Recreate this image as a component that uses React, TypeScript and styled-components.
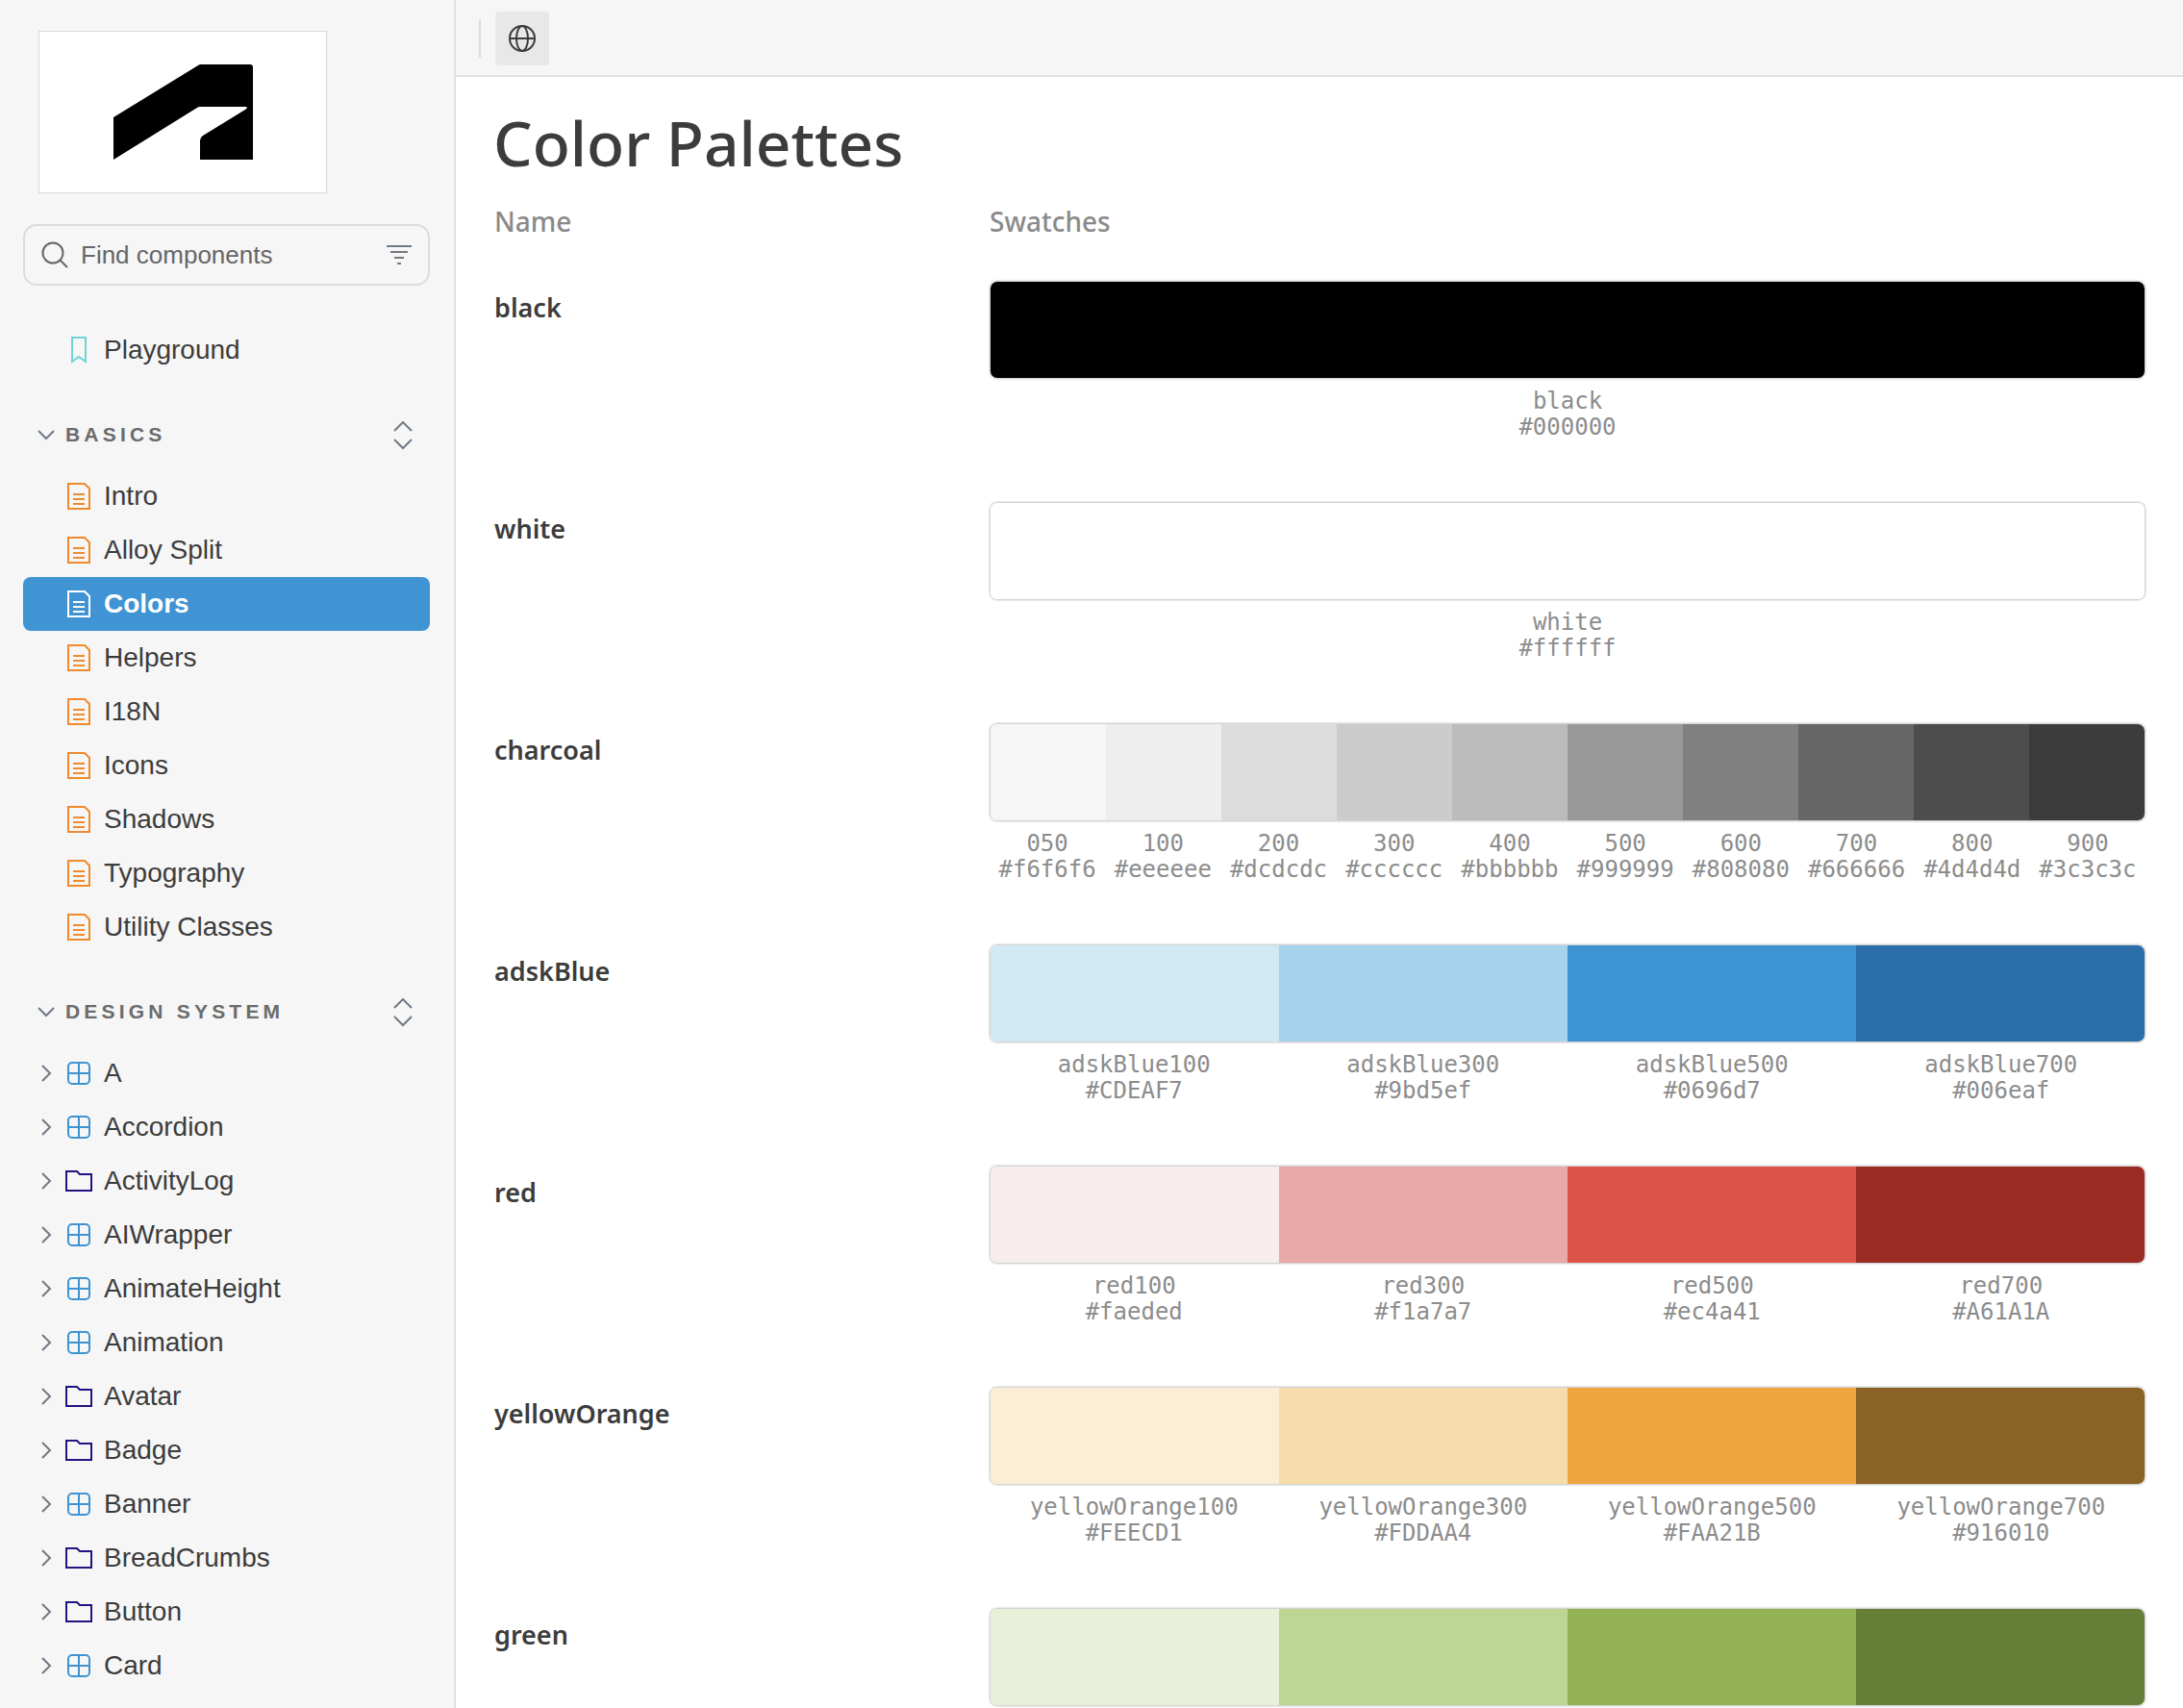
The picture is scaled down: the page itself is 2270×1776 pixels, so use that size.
import React from 'react';
import styled, { createGlobalStyle } from 'styled-components';

const GlobalStyle = createGlobalStyle`
  html, body {
    margin: 0;
    padding: 0;
    height: 100%;
    overflow: hidden;
    background: #fff;
  }
  * { box-sizing: border-box; }
`;

const Page = styled.div`
  display: flex;
  width: 2270px;
  height: 1776px;
  overflow: hidden;
`;

/* Sidebar */
const Sidebar = styled.aside`
  flex: 0 0 474px;
  height: 100%;
  padding: 32px 25px 0 24px;
  background: #f6f6f6;
  border-right: 2px solid #dde1e6;
  font-family: 'Liberation Sans', Arial, sans-serif;
  overflow: hidden;
`;

const LogoBox = styled.div`
  width: 300px;
  height: 169px;
  margin-left: 16px;
  padding-left: 2px;
  background: #fff;
  border: 1px solid #d8d8d2;
  display: flex;
  align-items: center;
  justify-content: center;
`;

const SearchBox = styled.div`
  height: 64px;
  margin-top: 32px;
  padding: 0 17px 0 17px;
  display: flex;
  align-items: center;
  gap: 13px;
  border: 2px solid #dcdcdc;
  border-radius: 14px;
  color: #666;
  font-size: 26px;
`;

const SearchText = styled.span`
  flex: 1;
`;

const TopLink = styled.div`
  margin-top: 39px;
`;

const Row = styled.div<{ $selected?: boolean }>`
  height: 56px;
  display: flex;
  align-items: center;
  padding-left: 18px;
  border-radius: 8px;
  font-size: 28px;
  font-weight: ${(p) => (p.$selected ? 700 : 400)};
  color: ${(p) => (p.$selected ? '#fff' : '#3c3c3c')};
  background: ${(p) => (p.$selected ? '#4094d3' : 'transparent')};
`;

const RowCaret = styled.span`
  flex: 0 0 22px;
  height: 24px;
  display: flex;
  align-items: center;
`;

const RowIcon = styled.span`
  flex: 0 0 36px;
  margin-right: 8px;
  display: flex;
  align-items: center;
  justify-content: center;
  width: 36px;
`;

const SectionHeader = styled.div`
  height: 56px;
  margin-top: 32px;
  padding: 0 18px 0 15px;
  display: flex;
  align-items: center;
  color: #6b6b6b;
  font-size: 21px;
  font-weight: 700;
  letter-spacing: 4.2px;
`;

const SectionTitle = styled.span`
  flex: 1;
  margin-left: 11px;
`;

const UnfoldSlot = styled.span`
  display: flex;
  padding-top: 2px;
`;

const RowList = styled.div`
  margin-top: 8px;
`;

/* Main */
const Main = styled.main`
  flex: 1;
  min-width: 0;
  display: flex;
  flex-direction: column;
`;

const Toolbar = styled.div`
  flex: 0 0 80px;
  padding: 2px 0 0 24px;
  display: flex;
  align-items: center;
  background: #f6f6f6;
  border-bottom: 2px solid #dde1e6;
`;

const ToolDivider = styled.span`
  width: 2px;
  height: 40px;
  background: #dcdcdc;
`;

const ToolButton = styled.span`
  width: 56px;
  height: 56px;
  margin-left: 15px;
  display: flex;
  align-items: center;
  justify-content: center;
  background: #e8e8e8;
  border-radius: 4px;
`;

const Content = styled.div`
  padding: 31px 39px 0 40px;
  font-family: 'Noto Sans', sans-serif;
`;

const Title = styled.h1`
  margin: 0 0 0 -1px;
  height: 76px;
  line-height: 76px;
  font-size: 64px;
  font-weight: 500;
  color: #3c3c3c;
`;

const PaletteGrid = styled.div`
  display: grid;
  grid-template-columns: 515px 1fr;
`;

const HeaderCell = styled.div`
  margin-top: 23px;
  height: 40px;
  line-height: 40px;
  font-size: 28px;
  font-weight: 500;
  color: #8a8a8a;
`;

const NameCell = styled.div`
  margin-top: 42px;
  padding-top: 8px;
  height: 188px;
  line-height: 40px;
  font-size: 27px;
  font-weight: 600;
  color: #3c3c3c;
`;

const SwatchCell = styled.div`
  margin-top: 42px;
  height: 188px;
`;

const SwatchBar = styled.div`
  height: 102px;
  display: flex;
  border: 1px solid #d4d4d4;
  border-radius: 8px;
  overflow: hidden;
  box-shadow: 0 0 2px rgba(0, 0, 0, 0.3);
`;

const SwatchColor = styled.div<{ $color: string }>`
  flex: 1;
  background: ${(p) => p.$color};
`;

const LabelRow = styled.div`
  display: flex;
  margin-top: 10px;
`;

const SwatchLabel = styled.div`
  flex: 1 1 0;
  min-width: 0;
  text-align: center;
  font-family: 'DejaVu Sans Mono', 'Liberation Mono', monospace;
  font-size: 24px;
  line-height: 27px;
  color: #8c8c8c;
  white-space: nowrap;
`;

/* Icons */
const ChevronDown = () => (
  <svg width="18" height="12" viewBox="0 0 18 12" fill="none" stroke="#6f7a85" strokeWidth="2">
    <path d="M1 2 L9 10 L17 2" />
  </svg>
);

const ChevronRight = () => (
  <svg width="12" height="18" viewBox="0 0 12 18" fill="none" stroke="#6f7a85" strokeWidth="2">
    <path d="M2 1 L10 9 L2 17" />
  </svg>
);

const Unfold = () => (
  <svg width="20" height="30" viewBox="0 0 20 30" fill="none" stroke="#6f7a85" strokeWidth="2">
    <path d="M1 10 L10 1 L19 10" />
    <path d="M1 19 L10 28 L19 19" />
  </svg>
);

const DocIcon = ({ color }: { color: string }) => (
  <svg width="24" height="28" viewBox="0 0 24 28" fill="none" stroke={color} strokeWidth="2">
    <path d="M1 1 H18 L23 6 V27 H1 Z" />
    <path d="M6 12 H18 M6 17 H18 M6 22 H18" />
  </svg>
);

const GridIcon = () => (
  <svg width="24" height="24" viewBox="0 0 24 24" fill="none" stroke="#3e94d3" strokeWidth="2">
    <rect x="1" y="1" width="22" height="22" rx="4" />
    <path d="M12 1 V23 M1 12 H23" />
  </svg>
);

const FolderIcon = () => (
  <svg width="28" height="22" viewBox="0 0 28 22" fill="none" stroke="#1f1480" strokeWidth="2">
    <path d="M1 1 H12 L15 4 H27 V21 H1 Z" />
  </svg>
);

const BookmarkIcon = () => (
  <svg width="16" height="28" viewBox="0 0 16 28" fill="none" stroke="#6fd4d4" strokeWidth="2">
    <path d="M1 1 H15 V26 L8 21 L1 26 Z" />
  </svg>
);

const SearchIcon = () => (
  <svg width="28" height="28" viewBox="0 0 28 28" fill="none" stroke="#666" strokeWidth="2">
    <circle cx="12" cy="12" r="10.5" />
    <path d="M19.5 19.5 L27 27" />
  </svg>
);

const FilterIcon = () => (
  <svg width="26" height="20" viewBox="0 0 26 20" fill="none" stroke="#6f7a85" strokeWidth="2">
    <path d="M0 1 H26 M4 7 H22 M8 13 H18 M11 19 H15" />
  </svg>
);

const GlobeIcon = () => (
  <svg width="28" height="28" viewBox="0 0 28 28" fill="none" stroke="#3c3c3c" strokeWidth="2">
    <circle cx="14" cy="14" r="13" />
    <ellipse cx="14" cy="14" rx="6" ry="13" />
    <path d="M1 14 H27" />
  </svg>
);

const AutodeskLogo = () => (
  <svg width="146" height="100" viewBox="0 0 146 100">
    <path
      d="M0 55 L88 1 Q89 0 91 0 H142 Q145 0 145 3 V99 H90 V79 Q90 76 93 74 L137 47 Q141 44 137 44 H90 Q88 44 87 45 L0 99 Z"
      fill="#000"
    />
  </svg>
);

/* Data */
const basics = ['Intro', 'Alloy Split', 'Colors', 'Helpers', 'I18N', 'Icons', 'Shadows', 'Typography', 'Utility Classes'];

const designSystem: { name: string; kind: 'grid' | 'folder' }[] = [
  { name: 'A', kind: 'grid' },
  { name: 'Accordion', kind: 'grid' },
  { name: 'ActivityLog', kind: 'folder' },
  { name: 'AIWrapper', kind: 'grid' },
  { name: 'AnimateHeight', kind: 'grid' },
  { name: 'Animation', kind: 'grid' },
  { name: 'Avatar', kind: 'folder' },
  { name: 'Badge', kind: 'folder' },
  { name: 'Banner', kind: 'grid' },
  { name: 'BreadCrumbs', kind: 'folder' },
  { name: 'Button', kind: 'folder' },
  { name: 'Card', kind: 'grid' },
];

type Swatch = { fill: string; label?: string; code?: string };
type Palette = { name: string; swatches: Swatch[] };

const palettes: Palette[] = [
  { name: 'black', swatches: [{ fill: '#000000', label: 'black', code: '#000000' }] },
  { name: 'white', swatches: [{ fill: '#ffffff', label: 'white', code: '#ffffff' }] },
  {
    name: 'charcoal',
    swatches: [
      { fill: '#f6f6f6', label: '050', code: '#f6f6f6' },
      { fill: '#eeeeee', label: '100', code: '#eeeeee' },
      { fill: '#dcdcdc', label: '200', code: '#dcdcdc' },
      { fill: '#cccccc', label: '300', code: '#cccccc' },
      { fill: '#bbbbbb', label: '400', code: '#bbbbbb' },
      { fill: '#999999', label: '500', code: '#999999' },
      { fill: '#808080', label: '600', code: '#808080' },
      { fill: '#666666', label: '700', code: '#666666' },
      { fill: '#4d4d4d', label: '800', code: '#4d4d4d' },
      { fill: '#3c3c3c', label: '900', code: '#3c3c3c' },
    ],
  },
  {
    name: 'adskBlue',
    swatches: [
      { fill: '#d1e8f5', label: 'adskBlue100', code: '#CDEAF7' },
      { fill: '#a7d2ec', label: 'adskBlue300', code: '#9bd5ef' },
      { fill: '#3e94d3', label: 'adskBlue500', code: '#0696d7' },
      { fill: '#2a6ea9', label: 'adskBlue700', code: '#006eaf' },
    ],
  },
  {
    name: 'red',
    swatches: [
      { fill: '#f7eded', label: 'red100', code: '#faeded' },
      { fill: '#e9a9a9', label: 'red300', code: '#f1a7a7' },
      { fill: '#dc5449', label: 'red500', code: '#ec4a41' },
      { fill: '#9a2a22', label: 'red700', code: '#A61A1A' },
    ],
  },
  {
    name: 'yellowOrange',
    swatches: [
      { fill: '#fbeed4', label: 'yellowOrange100', code: '#FEECD1' },
      { fill: '#f7dcab', label: 'yellowOrange300', code: '#FDDAA4' },
      { fill: '#eea540', label: 'yellowOrange500', code: '#FAA21B' },
      { fill: '#8a6226', label: 'yellowOrange700', code: '#916010' },
    ],
  },
  {
    name: 'green',
    swatches: [{ fill: '#e8f0d9' }, { fill: '#bed693' }, { fill: '#93b254' }, { fill: '#657f38' }],
  },
];

const App: React.FC = () => (
  <Page>
    <GlobalStyle />
    <Sidebar>
      <LogoBox>
        <AutodeskLogo />
      </LogoBox>
      <SearchBox>
        <SearchIcon />
        <SearchText>Find components</SearchText>
        <FilterIcon />
      </SearchBox>
      <TopLink>
        <Row>
          <RowCaret />
          <RowIcon>
            <BookmarkIcon />
          </RowIcon>
          Playground
        </Row>
      </TopLink>

      <SectionHeader>
        <ChevronDown />
        <SectionTitle>BASICS</SectionTitle>
        <UnfoldSlot>
          <Unfold />
        </UnfoldSlot>
      </SectionHeader>
      <RowList>
        {basics.map((name) => (
          <Row key={name} $selected={name === 'Colors'}>
            <RowCaret />
            <RowIcon>
              <DocIcon color={name === 'Colors' ? '#fff' : '#f08a2c'} />
            </RowIcon>
            {name}
          </Row>
        ))}
      </RowList>

      <SectionHeader>
        <ChevronDown />
        <SectionTitle>DESIGN SYSTEM</SectionTitle>
        <UnfoldSlot>
          <Unfold />
        </UnfoldSlot>
      </SectionHeader>
      <RowList>
        {designSystem.map((item) => (
          <Row key={item.name}>
            <RowCaret>
              <ChevronRight />
            </RowCaret>
            <RowIcon>{item.kind === 'grid' ? <GridIcon /> : <FolderIcon />}</RowIcon>
            {item.name}
          </Row>
        ))}
      </RowList>
    </Sidebar>

    <Main>
      <Toolbar>
        <ToolDivider />
        <ToolButton>
          <GlobeIcon />
        </ToolButton>
      </Toolbar>
      <Content>
        <Title>Color Palettes</Title>
        <PaletteGrid>
          <HeaderCell>Name</HeaderCell>
          <HeaderCell>Swatches</HeaderCell>
          {palettes.map((palette) => (
            <React.Fragment key={palette.name}>
              <NameCell>{palette.name}</NameCell>
              <SwatchCell>
                <SwatchBar>
                  {palette.swatches.map((s) => (
                    <SwatchColor key={s.fill} $color={s.fill} />
                  ))}
                </SwatchBar>
                <LabelRow>
                  {palette.swatches
                    .filter((s) => s.label)
                    .map((s) => (
                      <SwatchLabel key={s.fill}>
                        {s.label}
                        <br />
                        {s.code}
                      </SwatchLabel>
                    ))}
                </LabelRow>
              </SwatchCell>
            </React.Fragment>
          ))}
        </PaletteGrid>
      </Content>
    </Main>
  </Page>
);

export default App;
